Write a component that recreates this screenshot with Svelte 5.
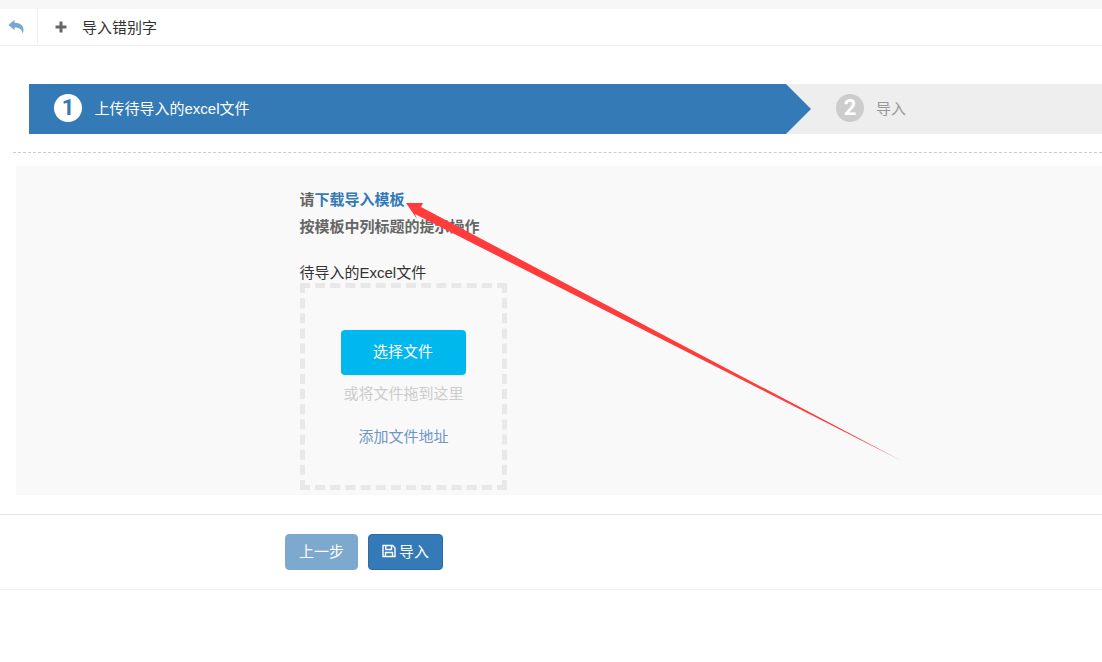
<script>
	const steps = [
		{ num: 1, label: '上传待导入的excel文件', active: true },
		{ num: 2, label: '导入', active: false }
	];
</script>

<div class="page">
	<header class="toolbar">
		<button class="back" aria-label="返回">
			<svg width="16" height="15" viewBox="0 0 16 15">
				<path d="M0.5 6 L6.5 0.8 V3.8 C11.5 3.8 15.5 5.8 15.5 11 C15.5 12.5 15 13.7 14.4 14.6 C14.5 10.5 11.5 8.4 6.5 8.4 V11.2 Z" fill="#7aa7d1" />
			</svg>
		</button>
		<div class="title">
			<svg width="12" height="12" viewBox="0 0 12 12">
				<path d="M4.5 0.5 H7.5 V4.5 H11.5 V7.5 H7.5 V11.5 H4.5 V7.5 H0.5 V4.5 H4.5 Z" fill="#666" />
			</svg>
			<span>导入错别字</span>
		</div>
	</header>

	<nav class="steps">
		{#each steps as step}
			<div class="step" class:active={step.active}>
				<span class="num">{step.num}</span>
				<span class="label">{step.label}</span>
			</div>
		{/each}
	</nav>

	<div class="divider"></div>

	<section class="panel">
		<div class="form">
			<p class="hint">请<a href="#tpl">下载导入模板</a></p>
			<p class="hint second">按模板中列标题的提示操作</p>
			<div class="file-label">待导入的Excel文件</div>
			<div class="dropzone">
				<button class="pick">选择文件</button>
				<div class="drag">或将文件拖到这里</div>
				<a class="addr" href="#addr">添加文件地址</a>
			</div>
		</div>
	</section>

	<footer class="actions">
		<button class="btn prev">上一步</button>
		<button class="btn primary">
			<svg width="14" height="14" viewBox="0 0 14 14" fill="none" stroke="#fff" stroke-width="1.4">
				<path d="M1 1.5 H10.5 L13 4 V12.5 H1 Z" />
				<path d="M3.8 1.5 V5.5 H9.5 V1.5" />
				<path d="M3.5 12.5 V8.5 H10.5 V12.5" />
			</svg>
			导入
		</button>
	</footer>

	<svg class="arrow" width="1102" height="662" viewBox="0 0 1102 662">
		<path d="M406 203 L423 203 L421 207 L902 461 L415 214 L417 219 Z" fill="#ff3b3b" />
	</svg>
</div>

<style>
	:global(body) {
		background: #fff;
		font-family: "Liberation Sans", "Noto Sans CJK SC", sans-serif;
	}

	.page {
		position: relative;
		height: 662px;
		overflow: hidden;
		padding-top: 9px;
		box-sizing: border-box;
		background: linear-gradient(#f7f7f7 9px, #fff 9px);
		font-size: 15px;
		color: #333;
	}

	button {
		font-family: inherit;
		cursor: pointer;
	}

	.toolbar {
		display: flex;
		height: 37px;
		box-sizing: border-box;
		background: #fff;
		border-bottom: 1px solid #eee;
	}

	.back {
		width: 38px;
		padding: 0 6px 2px 0;
		display: flex;
		align-items: center;
		justify-content: center;
		background: none;
		border: 0;
		border-right: 1px solid #f0f0f0;
	}

	.title {
		display: flex;
		align-items: center;
		gap: 15px;
		padding-left: 17px;
		padding-bottom: 1px;
		color: #333;
	}

	.steps {
		display: flex;
		height: 50px;
		margin: 38px 0 0 29px;
		background: #eee;
	}

	.step {
		position: relative;
		display: flex;
		align-items: center;
		gap: 13px;
		flex: 1;
		box-sizing: border-box;
		padding-left: 25px;
		padding-bottom: 3px;
		color: #999;
	}

	.step .label {
		margin-bottom: 1px;
	}

	.step.active {
		flex: 0 0 757px;
		background: #337ab7;
		color: #fff;
	}

	.step.active .label {
		margin-left: -0.5px;
	}

	.step.active::after {
		content: '';
		position: absolute;
		left: 100%;
		top: 0;
		border-left: 25px solid #337ab7;
		border-top: 25px solid transparent;
		border-bottom: 25px solid transparent;
	}

	.step:not(.active) {
		gap: 12px;
		padding-left: 50px;
	}

	.num {
		width: 28px;
		height: 28px;
		border-radius: 50%;
		display: flex;
		align-items: center;
		justify-content: center;
		background: #ccc;
		color: #fff;
		font: 700 22px "Roboto", sans-serif;
	}

	.active .num {
		background: #fff;
		color: #337ab7;
	}

	.divider {
		margin: 18px 0 0 13px;
		border-top: 1px dashed #ccc;
	}

	.panel {
		height: 329px;
		margin: 13px 0 0 16px;
		background: #f9f9f9;
	}

	.form {
		padding: 24px 0 0 284px;
	}

	.hint {
		margin: 0 0 0 -0.5px;
		height: 27px;
		line-height: 20px;
		font-weight: 700;
		color: #666;
	}

	.hint a {
		color: #337ab7;
		text-decoration: none;
	}

	.second {
		height: 46px;
	}

	.file-label {
		height: 20px;
		margin-left: -0.5px;
		line-height: 20px;
	}

	.dropzone {
		width: 207px;
		height: 207px;
		box-sizing: border-box;
		display: flex;
		flex-direction: column;
		align-items: center;
		padding-top: 42px;
		border: 5px dashed #e8e8e8;
	}

	.pick {
		width: 125px;
		height: 45px;
		border: 0;
		border-radius: 4px;
		background: #00b7ee;
		color: #fff;
		font-size: 15px;
		padding: 0 1px 4px 0;
	}

	.drag {
		margin-top: 9px;
		line-height: 20px;
		color: #ccc;
	}

	.addr {
		margin-top: 23px;
		line-height: 20px;
		color: #6f96c6;
		text-decoration: none;
	}

	.actions {
		display: flex;
		gap: 10px;
		height: 76px;
		box-sizing: border-box;
		margin-top: 19px;
		padding: 19px 0 0 285px;
		border-top: 1px solid #e7e7e7;
		border-bottom: 1px solid #f0f0f0;
	}

	.btn {
		height: 36px;
		display: flex;
		align-items: center;
		justify-content: center;
		gap: 3px;
		border: 1px solid #2e6da4;
		border-radius: 4px;
		color: #fff;
		font-size: 15px;
		padding: 0 0 3px;
	}

	.prev {
		width: 73px;
		background: #7ea9cf;
		border-color: #7ea9cf;
	}

	.primary {
		width: 75px;
		background: #337ab7;
	}

	.arrow {
		position: absolute;
		left: 0;
		top: 0;
		pointer-events: none;
	}
</style>
